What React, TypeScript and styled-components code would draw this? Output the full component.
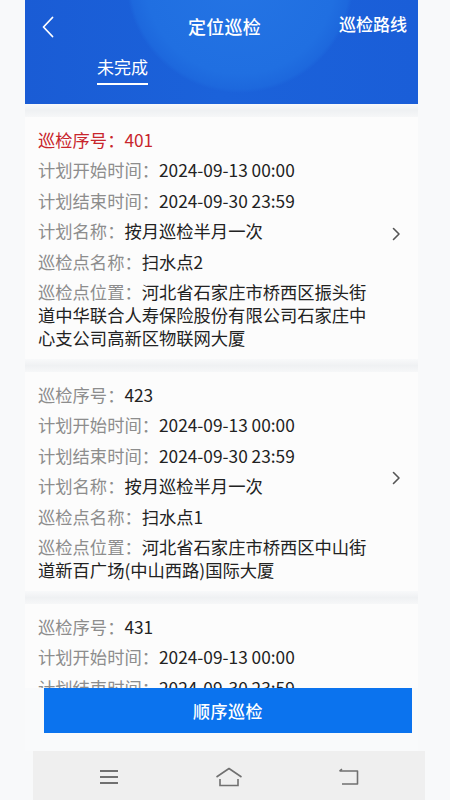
import styled, { createGlobalStyle } from "styled-components";

const GlobalStyle = createGlobalStyle`
  html, body {
    margin: 0;
    padding: 0;
    background: #f8f9fa;
    font-family: "Noto Sans CJK SC", "Noto Sans", sans-serif;
  }
`;

type Field = { label: string; value: string };
type Task = { id: string; fields: Field[]; highlight?: boolean };

const tasks: Task[] = [
  {
    id: "401",
    highlight: true,
    fields: [
      { label: "计划开始时间", value: "2024-09-13 00:00" },
      { label: "计划结束时间", value: "2024-09-30 23:59" },
      { label: "计划名称", value: "按月巡检半月一次" },
      { label: "巡检点名称", value: "扫水点2" },
      {
        label: "巡检点位置",
        value: "河北省石家庄市桥西区振头街道中华联合人寿保险股份有限公司石家庄中心支公司高新区物联网大厦",
      },
    ],
  },
  {
    id: "423",
    fields: [
      { label: "计划开始时间", value: "2024-09-13 00:00" },
      { label: "计划结束时间", value: "2024-09-30 23:59" },
      { label: "计划名称", value: "按月巡检半月一次" },
      { label: "巡检点名称", value: "扫水点1" },
      { label: "巡检点位置", value: "河北省石家庄市桥西区中山街道新百广场(中山西路)国际大厦" },
    ],
  },
  {
    id: "431",
    fields: [
      { label: "计划开始时间", value: "2024-09-13 00:00" },
      { label: "计划结束时间", value: "2024-09-30 23:59" },
      { label: "计划名称", value: "按月巡检半月一次" },
      { label: "巡检点名称", value: "扫水点3" },
      { label: "巡检点位置", value: "河北省石家庄市桥西区中山街道新百广场(中山西路)国际大厦" },
    ],
  },
];

function TaskCard({ task }: { task: Task }) {
  return (
    <Card>
      <Fields>
        <Row $red={task.highlight}>
          <Label>巡检序号：</Label>
          <Value>{task.id}</Value>
        </Row>
        {task.fields.map((f) => (
          <Row key={f.label}>
            <Label>{f.label}：</Label>
            <Value>{f.value}</Value>
          </Row>
        ))}
      </Fields>
      <Arrow>
        <svg width="9" height="14" viewBox="0 0 9 14">
          <path d="M1.5 1.5 L7 7 L1.5 12.5" fill="none" stroke="#555" strokeWidth="1.6" strokeLinecap="round" strokeLinejoin="round" />
        </svg>
      </Arrow>
    </Card>
  );
}

export default function App() {
  return (
    <Root>
      <GlobalStyle />
      <Screen>
        <Header>
          <TopBar>
            <BackButton>
              <svg width="12" height="22" viewBox="0 0 12 22">
                <path d="M10.5 1.5 L1.5 11 L10.5 20.5" fill="none" stroke="#fff" strokeWidth="1.8" strokeLinecap="round" strokeLinejoin="round" />
              </svg>
            </BackButton>
            <Title>定位巡检</Title>
            <RouteLink>巡检路线</RouteLink>
          </TopBar>
          <Tabs>
            <Tab>未完成</Tab>
          </Tabs>
        </Header>
        <List>
          {tasks.map((t) => (
            <div key={t.id}>
              <Divider />
              <TaskCard task={t} />
            </div>
          ))}
        </List>
        <Footer>
          <PrimaryButton>顺序巡检</PrimaryButton>
        </Footer>
      </Screen>
      <NavBar>
        <NavIcon>
          <svg width="20" height="16" viewBox="0 0 20 16">
            <path d="M1 2 H19 M1 8 H19 M1 14 H19" stroke="#707070" strokeWidth="1.8" />
          </svg>
        </NavIcon>
        <NavIcon>
          <svg width="28" height="20" viewBox="0 0 28 20">
            <path d="M1.5 10 L14 1.5 L26.5 10" fill="none" stroke="#707070" strokeWidth="1.6" strokeLinejoin="round" />
            <path d="M5 12 V18.5 H23 V12" fill="none" stroke="#707070" strokeWidth="1.6" />
          </svg>
        </NavIcon>
        <NavIcon>
          <svg width="22" height="18" viewBox="0 0 22 18">
            <path d="M4 1 L1.5 3 M1.5 3 H19.5 V16 H4" fill="none" stroke="#707070" strokeWidth="1.6" strokeLinejoin="round" />
          </svg>
        </NavIcon>
      </NavBar>
    </Root>
  );
}

const Root = styled.div`
  width: 450px;
  height: 800px;
  display: flex;
  flex-direction: column;
  overflow: hidden;
  background: #f8f9fa;
`;

const Screen = styled.div`
  flex: 1;
  min-height: 0;
  width: 393px;
  margin-left: 25px;
  display: flex;
  flex-direction: column;
`;

const Header = styled.div`
  height: 104px;
  flex-shrink: 0;
  display: flex;
  flex-direction: column;
  color: #fff;
  background:
    radial-gradient(circle at 215px -21px, #2474e4 0, #206fe1 95px, #1d68dd 110px, transparent 114px),
    linear-gradient(90deg, #1a5cd5 0%, #1b62da 50%, #1a5ed8 100%);
`;

const TopBar = styled.div`
  height: 52px;
  display: grid;
  grid-template-columns: 1fr auto 1fr;
  align-items: center;
  padding: 0 11px 0 17px;
`;

const BackButton = styled.div`
  display: flex;
  align-items: center;
  padding-top: 2px;
`;

const Title = styled.div`
  font-size: 18px;
  font-weight: 500;
  letter-spacing: 0.3px;
  margin-top: -1px;
`;

const RouteLink = styled.div`
  justify-self: end;
  font-size: 17px;
  font-weight: 500;
  margin-bottom: 6px;
`;

const Tabs = styled.div`
  display: flex;
  padding-left: 72px;
  padding-top: 3px;
`;

const Tab = styled.div`
  font-size: 17px;
  line-height: 24px;
  padding-bottom: 4px;
  border-bottom: 2.5px solid #fff;
`;

const List = styled.div`
  flex: 1;
  min-height: 0;
  overflow: hidden;
  background: #fcfcfc;
`;

const Divider = styled.div`
  height: 13px;
  background: linear-gradient(180deg, #f8f9fa 0%, #eff1f3 50%, #f6f7f8 100%);
`;

const Card = styled.div`
  display: flex;
  align-items: center;
  padding: 11px 0 10px 13px;
  background: #fcfcfc;
`;

const Fields = styled.div`
  width: 342px;
  display: flex;
  flex-direction: column;
  gap: 7.4px;
`;

const Row = styled.div<{ $red?: boolean }>`
  font-size: 17.3px;
  line-height: 23px;
  color: #222;
  ${(p) => p.$red && `& > span { color: #c8262c; }`}
`;

const Label = styled.span`
  color: #8d8d8d;
`;

const Value = styled.span`
  color: #222;
`;

const Arrow = styled.div`
  margin-left: 12px;
  margin-top: -8px;
  display: flex;
`;

const Footer = styled.div`
  flex-shrink: 0;
  padding: 0 6px 18px 19px;
  background: #f9fafb;
`;

const PrimaryButton = styled.button`
  display: block;
  width: 100%;
  height: 45px;
  border: none;
  border-radius: 0;
  background: #0b73ee;
  color: #fff;
  font-family: "Noto Sans CJK SC", sans-serif;
  font-size: 17px;
  font-weight: 500;
  letter-spacing: 0.5px;
`;

const NavBar = styled.div`
  flex-shrink: 0;
  height: 49px;
  width: 392px;
  margin-left: 33px;
  padding: 0 16px;
  box-sizing: border-box;
  display: grid;
  grid-template-columns: repeat(3, 1fr);
  align-items: center;
  background: #efefef;
`;

const NavIcon = styled.div`
  display: flex;
  justify-content: center;
  padding-top: 2px;
`;
